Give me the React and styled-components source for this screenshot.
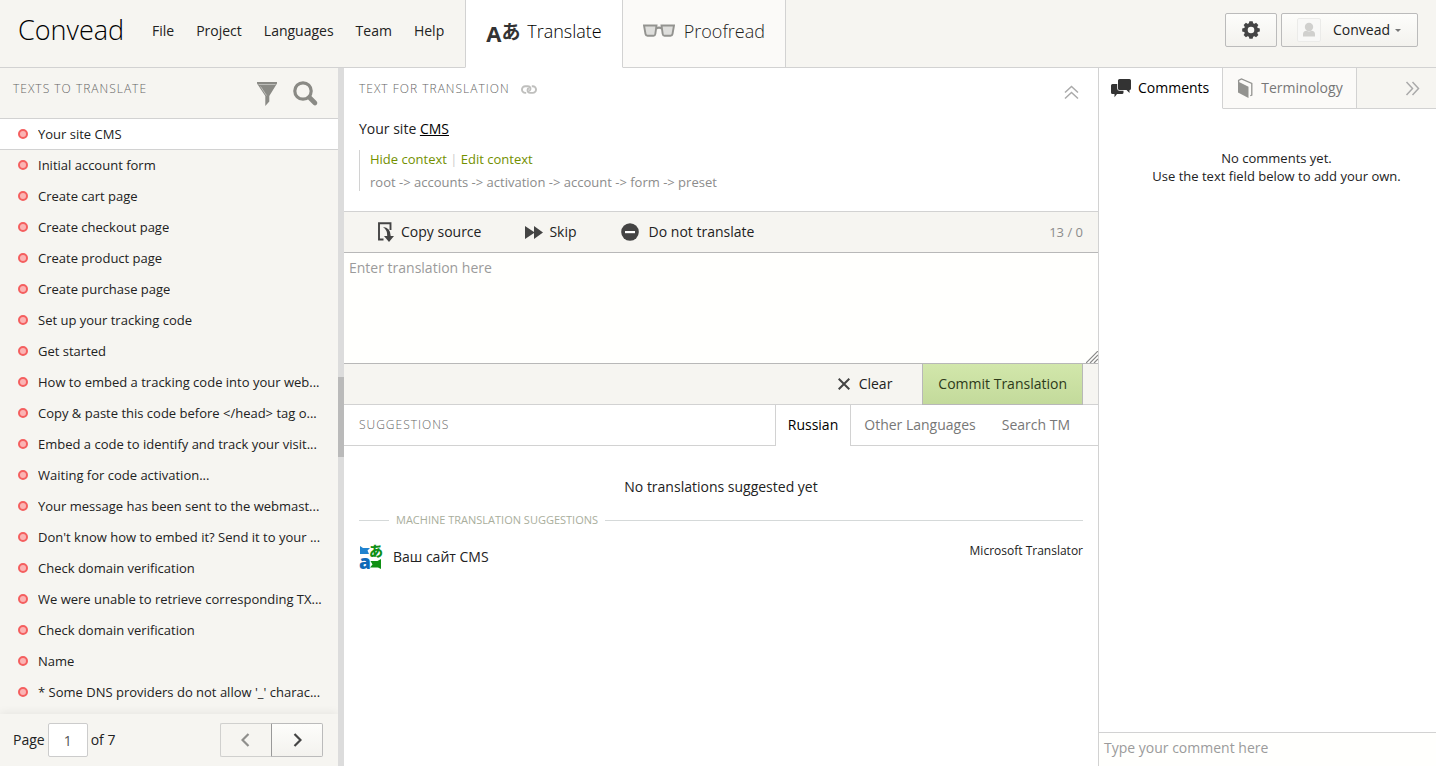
import React, { useState } from "react";
import styled, { createGlobalStyle, css } from "styled-components";

const texts = [
	"Your site CMS",
	"Initial account form",
	"Create cart page",
	"Create checkout page",
	"Create product page",
	"Create purchase page",
	"Set up your tracking code",
	"Get started",
	"How to embed a tracking code into your web...",
	"Copy & paste this code before </head> tag o...",
	"Embed a code to identify and track your visit...",
	"Waiting for code activation...",
	"Your message has been sent to the webmast...",
	"Don't know how to embed it? Send it to your ...",
	"Check domain verification",
	"We were unable to retrieve corresponding TX...",
	"Check domain verification",
	"Name",
	"* Some DNS providers do not allow '_' charac...",
];

const menu = ["File", "Project", "Languages", "Team", "Help"];

const FilterIcon = () => (
	<svg width="20" height="24" viewBox="0 0 20 24" aria-hidden="true">
		<path d="M0 0h20v1.5L12.3 14v5.5L8.3 24V14L0 1.5z" fill="#8a8a85" />
		<path d="M1.5 2.5h17M3.5 4.5L9.5 13.5" stroke="#c9c9c5" strokeWidth=".8" />
	</svg>
);

const SearchIcon = () => (
	<svg width="26" height="26" viewBox="0 0 26 26" fill="none" stroke="#8a8a85" aria-hidden="true">
		<circle cx="10" cy="10" r="8.2" strokeWidth="3.2" />
		<path d="M16.500 16.500l5.500 5.500" strokeWidth="4.600" strokeLinecap="round" />
	</svg>
);

const GlassesIcon = () => (
	<svg width="32" height="13" viewBox="0 0 32 13" stroke="#939390" strokeWidth="1.900" aria-hidden="true">
		<path d="M13 4.500q3-1.800 6 0" fill="none" strokeWidth="2.200" />
		<path d="M1 1.500h12.500l-1.200 8.500q-.2 1.700-1.800 1.700H4.500Q2.800 11.700 2.500 10z" fill="#dededc" />
		<path d="M31 1.500H18.500l1.200 8.500q.2 1.700 1.800 1.700h6q1.700 0 2-1.700z" fill="#dededc" />
	</svg>
);

const GearIcon = () => (
	<svg width="18" height="18" viewBox="-9 -9 18 18" aria-hidden="true">
		<circle r="5.100" fill="none" stroke="#444" strokeWidth="3.600" />
		{[0, 45, 90, 135, 180, 225, 270, 315].map((a) => (
			<path key={a} d="M-2.300-6L-1.600-8.800H1.600L2.300-6z" fill="#444" transform={`rotate(${a})`} />
		))}
	</svg>
);

const PersonIcon = () => (
	<svg width="24" height="24" viewBox="0 0 24 24" aria-hidden="true">
		<rect x=".5" y=".5" width="23" height="23" rx="1.500" fill="#f8f8f7" stroke="#ebebe9" />
		<circle cx="12" cy="9" r="4.200" fill="#d0d0ce" />
		<path d="M6 18.500v-2.500q0-3 3.500-3.200 2.500 1.500 5 0 3.500.2 3.500 3.200v2.500z" fill="#d0d0ce" />
	</svg>
);

const CommentsIcon = () => (
	<svg width="20" height="19" viewBox="0 0 20 19" fill="#333" aria-hidden="true">
		<path d="M1.500 5H12.500v8.500q0 1.500-1.500 1.500H6l-2.500 3.200V15h-2Q0 15 0 13.500v-7Q0 5 1.500 5z" />
		<path
			d="M8.500 0H18.500Q20 0 20 1.500v8q0 1.500-1.500 1.500v3L15.500 11H8.500Q7 11 7 9.500v-8Q7 0 8.500 0z"
			stroke="#fff"
			strokeWidth="1.600"
			paintOrder="stroke"
		/>
	</svg>
);

const BookIcon = () => (
	<svg width="19" height="20" viewBox="-3 0 19 20" aria-hidden="true">
		<path d="M0 3.500L10.500 8.800V20L0 14.500z" fill="#939390" />
		<path d="M.6 4V2.300L3.500 .9l10.300 4.500V17l-1.500.8" fill="none" stroke="#939390" strokeWidth="1.300" />
	</svg>
);

const LinkIcon = () => (
	<svg width="16" height="9" viewBox="0 0 16 9" fill="none" stroke="#bfbfbd" strokeWidth="1.900" aria-hidden="true">
		<path d="M5.200 7.900H4.300A3.300 3.300 0 0 1 4.300 1.200H6.600Q9.500 1.400 9.500 4 9.400 5.300 8.200 5.900" />
		<path d="M10.800 1.200H11.700A3.300 3.300 0 0 1 11.700 7.900H9.400Q6.500 7.700 6.500 5.100 6.600 3.800 7.800 3.200" />
	</svg>
);

const DoubleChevron = ({ up }) => (
	<svg width="15" height="15" viewBox="0 0 15 15" fill="none" stroke="#aaa" strokeWidth="1.500" aria-hidden="true">
		<path d={up ? "M1 7.500L7.500 1.500 14 7.500M1 13.500L7.500 7.500 14 13.500" : "M1.500 1L7.500 7.500 1.500 14M7.500 1L13.500 7.500 7.500 14"} />
	</svg>
);

const CopyIcon = () => (
	<svg width="16" height="20" viewBox="0 0 16 20" aria-hidden="true">
		<path d="M5.500 17.500H1V1.200H12.500V8" fill="none" stroke="#444" strokeWidth="1.900" />
		<path d="M5 5q7.500.5 7.700 9H16l-5 6-5-6h3.200Q9.500 8 5 5z" fill="#444" />
	</svg>
);

const SkipIcon = () => (
	<svg width="18" height="13" viewBox="0 0 18 13" fill="#444" aria-hidden="true">
		<path d="M0 0L9 6 9 0 18 6.500 9 13V7L0 13z" />
	</svg>
);

const MinusIcon = () => (
	<svg width="18" height="18" viewBox="0 0 18 18" aria-hidden="true">
		<circle cx="9" cy="9" r="8.800" fill="#444" />
		<path d="M4 8h10v2.200H4z" fill="#fff" />
	</svg>
);

const CloseIcon = () => (
	<svg width="12" height="12" viewBox="0 0 12 12" stroke="#444" strokeWidth="2" aria-hidden="true">
		<path d="M.7.7l10.600 10.600M11.300.7L.7 11.300" />
	</svg>
);

const Chevron = ({ next }) => (
	<svg width="10" height="14" viewBox="0 0 10 14" fill="none" stroke={next ? "#444" : "#8f8f8c"} strokeWidth="2.200" aria-hidden="true">
		<path d={next ? "M2.500 1L8.500 7l-6 6" : "M7.500 1l-6 6 6 6"} />
	</svg>
);

const MicrosoftIcon = () => (
	<svg width="24" height="26" viewBox="0 0 24 26" overflow="visible" aria-hidden="true">
		<path d="M1 2l3 2h7L8.500 6.500 10 10H1z" fill="#2083cf" />
		<path d="M22 15v10l-3-1.500h-8l2.500-3-2-3.500h7z" fill="#0f9015" />
		<text x="0" y="25" fontSize="19" fontWeight="800" fontFamily="Open Sans" fill="#0f69b8">
			a
		</text>
		<text x="10" y="12" fontSize="14" fontWeight="900" fontFamily="Noto Sans CJK JP" fill="#0f9015">
			あ
		</text>
	</svg>
);

function App() {
	const [selected, setSelected] = useState(0);
	const [page, setPage] = useState("1");
	const [translation, setTranslation] = useState("");

	return (
		<Page>
			<GlobalStyle />
			<Header>
				<Logo>Convead</Logo>
				<Menu>
					{menu.map((item) => (
						<MenuButton key={item}>{item}</MenuButton>
					))}
				</Menu>
				<ModeTab $active>
					<Letters aria-hidden="true">
						A<Kana>あ</Kana>
					</Letters>
					Translate
				</ModeTab>
				<ModeTab>
					<GlassesIcon />
					Proofread
				</ModeTab>
				<Account>
					<GearButton aria-label="Settings">
						<GearIcon />
					</GearButton>
					<UserButton>
						<PersonIcon />
						<span>Convead</span>
						<Caret />
					</UserButton>
				</Account>
			</Header>

			<Main>
				<Sidebar>
					<SidebarHeader>
						<Heading>Texts to translate</Heading>
						<SidebarTools>
							<IconButton aria-label="Filter">
								<FilterIcon />
							</IconButton>
							<IconButton aria-label="Search">
								<SearchIcon />
							</IconButton>
						</SidebarTools>
					</SidebarHeader>
					<TextList>
						{texts.map((text, i) => (
							<li key={i}>
								<TextRow $active={i === selected} onClick={() => setSelected(i)}>
									<Dot />
									<span>{text}</span>
								</TextRow>
							</li>
						))}
					</TextList>
					<Pagination>
						<label htmlFor="page">Page</label>
						<PageInput id="page" value={page} onChange={(e) => setPage(e.target.value)} />
						<span>of 7</span>
						<Pager>
							<PrevButton disabled aria-label="Previous page">
								<Chevron />
							</PrevButton>
							<NextButton aria-label="Next page">
								<Chevron next />
							</NextButton>
						</Pager>
					</Pagination>
				</Sidebar>

				<Splitter>
					<Grip />
				</Splitter>

				<Editor>
					<Source>
						<SourceHeader>
							<Heading>Text for translation</Heading>
							<LinkIcon />
							<Collapse aria-label="Collapse">
								<DoubleChevron up />
							</Collapse>
						</SourceHeader>
						<SourceText>
							Your site <Term href="#term">CMS</Term>
						</SourceText>
						<Context>
							<ContextLinks>
								<a href="#hide">Hide context</a> <Bar>|</Bar> <a href="#edit">Edit context</a>
							</ContextLinks>
							<div>root -&gt; accounts -&gt; activation -&gt; account -&gt; form -&gt; preset</div>
						</Context>
					</Source>
					<Toolbar>
						<ToolButton $gap="7px">
							<CopyIcon />
							Copy source
						</ToolButton>
						<ToolButton $gap="6px">
							<SkipIcon />
							Skip
						</ToolButton>
						<ToolButton $gap="10px">
							<MinusIcon />
							Do not translate
						</ToolButton>
						<Counter>13 / 0</Counter>
					</Toolbar>
					<InputWrap>
						<TranslationInput
							aria-label="Translation"
							placeholder="Enter translation here"
							value={translation}
							onChange={(e) => setTranslation(e.target.value)}
						/>
						<ResizeMark width="12" height="12" viewBox="0 0 12 12" aria-hidden="true">
							<path d="M0 12L12 0M4 12L12 4M8 12L12 8" stroke="#888" strokeWidth="1.200" />
						</ResizeMark>
					</InputWrap>
					<Actions>
						<ToolButton $gap="9px" onClick={() => setTranslation("")}>
							<CloseIcon />
							Clear
						</ToolButton>
						<CommitButton>Commit Translation</CommitButton>
					</Actions>
					<SuggestionTabs>
						<Heading>Suggestions</Heading>
						<Tab $active>Russian</Tab>
						<Tab>Other Languages</Tab>
						<Tab>Search TM</Tab>
					</SuggestionTabs>
					<Suggestions>
						<Empty>No translations suggested yet</Empty>
						<Divider>Machine translation suggestions</Divider>
						<Suggestion>
							<MicrosoftIcon />
							<span>Ваш сайт CMS</span>
							<Engine>Microsoft Translator</Engine>
						</Suggestion>
					</Suggestions>
				</Editor>

				<Comments>
					<CommentTabs>
						<PanelTab $active>
							<CommentsIcon />
							Comments
						</PanelTab>
						<PanelTab>
							<BookIcon />
							Terminology
						</PanelTab>
						<PanelToggle aria-label="Hide panel">
							<DoubleChevron />
						</PanelToggle>
					</CommentTabs>
					<NoComments>
						No comments yet.
						<br />
						Use the text field below to add your own.
					</NoComments>
					<CommentInput aria-label="Comment" placeholder="Type your comment here" />
				</Comments>
			</Main>
		</Page>
	);
}

const GlobalStyle = createGlobalStyle`
	* {
		box-sizing: border-box;
	}
	body {
		margin: 0;
		color: #222;
		font-family: "Open Sans", "Noto Sans", sans-serif;
		font-size: 14px;
		line-height: 20px;
	}
	button, input, textarea {
		margin: 0;
		padding: 0;
		border: 0;
		background: none;
		color: inherit;
		font: inherit;
	}
	button {
		cursor: pointer;
	}
	svg {
		display: block;
		flex: none;
	}
`;

const Page = styled.div`
	display: flex;
	flex-direction: column;
	height: 100vh;
	overflow: hidden;
	background: #fff;
`;

const Header = styled.header`
	display: flex;
	height: 68px;
	flex: none;
	background: #f6f5f1;
	border-bottom: 1px solid #d2d2d2;
`;

const Logo = styled.h1`
	margin: 0;
	padding: 10px 0 0 18px;
	width: 141px;
	color: #000;
	font-size: 27px;
	font-weight: 300;
	line-height: 40px;
`;

const Menu = styled.nav`
	display: flex;
	height: 62px;
	padding-right: 10px;
`;

const MenuButton = styled.button`
	padding: 0 11px;
`;

const ModeTab = styled.button`
	display: flex;
	align-items: center;
	gap: 9px;
	margin-bottom: -1px;
	padding: 0 20px 6px;
	font-size: 18px;
	font-weight: 300;
	border-right: 1px solid #d2d2d2;
	border-bottom: 1px solid #d2d2d2;
	background: #fbfaf8;

	${(props) =>
		props.$active &&
		css`
			border-left: 1px solid #d2d2d2;
			border-bottom-color: #fff;
			background: #fff;
			color: #000;
		`}
`;

const Letters = styled.span`
	display: flex;
	align-items: center;
	width: 32px;
	padding-top: 4px;
	color: #333;
	font-size: 22px;
	font-weight: 700;
`;

const Kana = styled.span`
	padding-bottom: 4px;
	font-family: "Noto Sans CJK JP", sans-serif;
	font-size: 19px;
`;

const Account = styled.div`
	display: flex;
	gap: 4px;
	margin-left: auto;
	padding: 13px 18px 0 0;
`;

const buttonFace = css`
	display: flex;
	align-items: center;
	justify-content: center;
	height: 34px;
	border: 1px solid #bbb;
	border-radius: 2px;
	background: linear-gradient(#fdfdfb, #f3f2ee);
`;

const GearButton = styled.button`
	${buttonFace}
	width: 52px;
`;

const UserButton = styled.button`
	${buttonFace}
	padding: 0 16px 0 15px;

	span {
		margin-left: 12px;
	}
`;

const Caret = styled.i`
	margin-left: 5px;
	border: 3px solid transparent;
	border-top-color: #777;
	border-bottom: 0;
`;

const Main = styled.main`
	display: grid;
	grid-template-columns: 338px 6px minmax(0, 1fr) 338px;
	flex: 1;
	min-height: 0;
`;

const Sidebar = styled.section`
	display: flex;
	flex-direction: column;
	min-height: 0;
	background: #f6f5f1;
`;

const SidebarHeader = styled.div`
	display: flex;
	justify-content: space-between;
	height: 51px;
	flex: none;
	padding: 11px 19px 0 13px;
	border-bottom: 1px solid #d2d2d2;
`;

const Heading = styled.h2`
	margin: 0;
	color: #666;
	font-size: 12px;
	font-weight: 300;
	letter-spacing: 1px;
	line-height: 20px;
	text-transform: uppercase;
`;

const SidebarTools = styled.div`
	display: flex;
	align-items: center;
	gap: 16px;
	height: 30px;
`;

const IconButton = styled.button`
	display: block;
`;

const TextList = styled.ul`
	flex: 1;
	min-height: 0;
	margin: 0;
	padding: 0;
	overflow: hidden;
	list-style: none;
`;

const TextRow = styled.button`
	display: flex;
	align-items: center;
	gap: 10px;
	width: 100%;
	height: 31px;
	padding: 0 12px 0 18px;
	border-bottom: 1px solid transparent;
	font-size: 13px;
	text-align: left;

	span {
		overflow: hidden;
		white-space: nowrap;
		text-overflow: ellipsis;
	}

	${(props) =>
		props.$active &&
		css`
			background: #fff;
			border-bottom-color: #d2d2d2;
		`}
`;

const Dot = styled.i`
	width: 10px;
	height: 10px;
	flex: none;
	border: 2px solid #f45f5f;
	border-radius: 50%;
	background: #fbb4b4;
`;

const Pagination = styled.div`
	display: flex;
	align-items: center;
	gap: 3px;
	height: 52px;
	flex: none;
	padding: 0 15px 0 13px;
	box-shadow: 0 -2px 8px rgba(0, 0, 0, 0.06);
`;

const PageInput = styled.input`
	width: 40px;
	height: 34px;
	border: 1px solid #ccc;
	border-radius: 2px;
	background: #fff;
	color: #555;
	text-align: center;
`;

const Pager = styled.div`
	display: flex;
	margin-left: auto;
`;

const PrevButton = styled.button`
	${buttonFace}
	width: 51px;
	border-color: #d0d0ce;
	border-right: 0;
	border-radius: 2px 0 0 2px;
	background: #f6f5f1;
`;

const NextButton = styled.button`
	${buttonFace}
	width: 52px;
	border-radius: 0 2px 2px 0;
	border-left-color: #999;
`;

const Splitter = styled.div`
	display: flex;
	align-items: center;
	background: #dcdcdc;
`;

const Grip = styled.div`
	width: 6px;
	height: 80px;
	background: #bababa;
`;

const Editor = styled.section`
	display: flex;
	flex-direction: column;
	min-width: 0;
`;

const Source = styled.div`
	padding: 10px 15px 20px;
`;

const SourceHeader = styled.div`
	display: flex;
	align-items: center;
	gap: 11px;
	height: 22px;
`;

const Collapse = styled(IconButton)`
	margin-left: auto;
	padding: 7px 4px 0 0;
`;

const SourceText = styled.p`
	margin: 19px 0 11px;
`;

const Term = styled.a`
	color: #000;
`;

const Context = styled.div`
	padding-left: 10px;
	border-left: 1px solid #d2d2d2;
	color: #8c8c8c;
	font-size: 13px;
	line-height: 18px;
`;

const ContextLinks = styled.div`
	margin-bottom: 5px;

	a {
		color: #739000;
		text-decoration: none;
	}
`;

const Bar = styled.span`
	color: #ccc;
`;

const Toolbar = styled.div`
	display: flex;
	align-items: center;
	gap: 44px;
	height: 42px;
	flex: none;
	padding: 0 15px 0 34px;
	border-top: 1px solid #d2d2d2;
	border-bottom: 1px solid #b8b8b8;
	background: #f6f5f1;
`;

const ToolButton = styled.button`
	display: flex;
	align-items: center;
	gap: ${(props) => props.$gap};
`;

const Counter = styled.span`
	margin-left: auto;
	color: #8c8c8c;
	font-size: 13px;
`;

const InputWrap = styled.div`
	position: relative;
	height: 110px;
	flex: none;
`;

const TranslationInput = styled.textarea`
	display: block;
	width: 100%;
	height: 100%;
	padding: 5px;
	resize: none;
	outline: none;
	background: #fffffd;

	&::placeholder {
		color: #9b9b9b;
	}
`;

const ResizeMark = styled.svg`
	position: absolute;
	right: 0;
	bottom: 0;
`;

const Actions = styled.div`
	display: flex;
	justify-content: flex-end;
	gap: 30px;
	height: 42px;
	flex: none;
	padding-right: 15px;
	border-top: 1px solid #b8b8b8;
	border-bottom: 1px solid #d2d2d2;
	background: #f6f5f1;
`;

const CommitButton = styled.button`
	margin-bottom: -1px;
	padding: 0 15px;
	border: 1px solid #b8b8b8;
	border-top: 0;
	background: linear-gradient(#d2e7ab, #c3da9b);
	color: #2d3a1a;
`;

const SuggestionTabs = styled.div`
	display: flex;
	height: 41px;
	flex: none;
	padding-right: 15px;
	border-bottom: 1px solid #d2d2d2;

	${Heading} {
		flex: 1;
		padding-left: 15px;
		line-height: 40px;
	}
`;

const Tab = styled.button`
	padding: 0 13px;
	color: #777;

	${(props) =>
		props.$active &&
		css`
			margin-bottom: -1px;
			padding: 0 12px 1px;
			border: solid #d2d2d2;
			border-width: 0 1px;
			background: #fff;
			color: #000;
		`}
`;

const Suggestions = styled.div`
	padding: 31px 15px;
`;

const Empty = styled.p`
	margin: 0;
	text-align: center;
`;

const Divider = styled.h3`
	display: flex;
	align-items: center;
	gap: 7px;
	margin: 13px 0 14px;
	color: #a9ae9c;
	font-size: 11px;
	font-weight: 400;
	text-transform: uppercase;

	&::before,
	&::after {
		content: "";
		width: 30px;
		height: 1px;
		background: #d5d9d9;
	}
	&::after {
		flex: 1;
	}
`;

const Suggestion = styled.div`
	display: flex;
	align-items: center;
	gap: 10px;
`;

const Engine = styled.span`
	align-self: flex-start;
	margin-left: auto;
	font-size: 12px;
	line-height: 14px;
`;

const Comments = styled.aside`
	display: flex;
	flex-direction: column;
	min-height: 0;
	border-left: 1px solid #d2d2d2;
`;

const CommentTabs = styled.div`
	display: flex;
	height: 41px;
	flex: none;
	border-bottom: 1px solid #d2d2d2;
	background: #f6f5f1;
`;

const PanelTab = styled.button`
	display: flex;
	align-items: center;
	gap: 7px;
	margin-bottom: -1px;
	padding: 0 13px 0 12px;
	border-right: 1px solid #d2d2d2;
	border-bottom: 1px solid #d2d2d2;
	background: #fbfaf8;
	color: #777;

	${(props) =>
		props.$active &&
		css`
			border-bottom-color: #fff;
			background: #fff;
			color: #000;
		`}
`;

const PanelToggle = styled(IconButton)`
	margin-left: auto;
	padding: 0 16px;
`;

const NoComments = styled.p`
	flex: 1;
	margin: 0;
	padding: 40px 15px 0 33px;
	font-size: 13px;
	line-height: 18px;
	text-align: center;
`;

const CommentInput = styled.textarea`
	height: 34px;
	padding: 5px;
	border-top: 1px solid #d2d2d2;
	background: #fffffd;
	resize: none;
	outline: none;

	&::placeholder {
		color: #9b9b9b;
	}
`;

export default App;
